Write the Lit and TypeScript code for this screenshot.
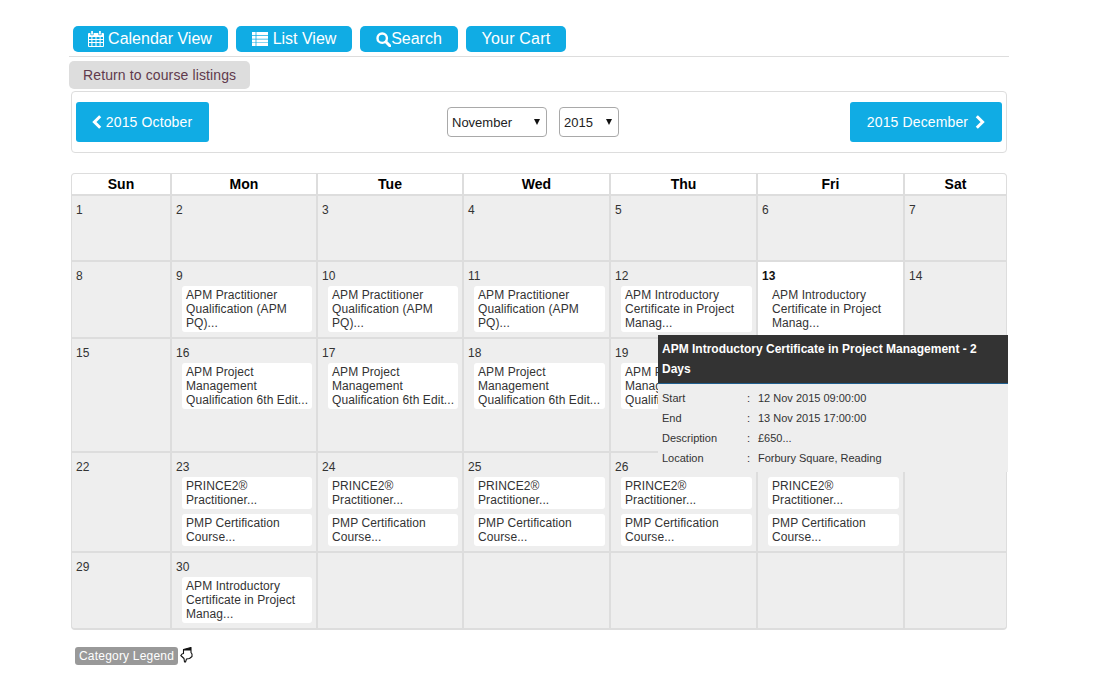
import { LitElement, html, css, svg } from "lit";
import { customElement } from "lit/decorators.js";

const PRAC = "APM Practitioner Qualification (APM PQ)...";
const PROJ = "APM Project Management Qualification 6th Edit...";
const INTRO = "APM Introductory Certificate in Project Manag...";
const P2 = "PRINCE2® Practitioner...";
const PMP = "PMP Certification Course...";

type Cell = { d?: number; ev?: string[]; today?: boolean };
const weeks: Cell[][] = [
  [1, 2, 3, 4, 5, 6, 7].map((d) => ({ d })),
  [{ d: 8 }, { d: 9, ev: [PRAC] }, { d: 10, ev: [PRAC] }, { d: 11, ev: [PRAC] }, { d: 12, ev: [INTRO] }, { d: 13, ev: [INTRO], today: true }, { d: 14 }],
  [{ d: 15 }, { d: 16, ev: [PROJ] }, { d: 17, ev: [PROJ] }, { d: 18, ev: [PROJ] }, { d: 19, ev: [PROJ] }, {}, {}],
  [{ d: 22 }, { d: 23, ev: [P2, PMP] }, { d: 24, ev: [P2, PMP] }, { d: 25, ev: [P2, PMP] }, { d: 26, ev: [P2, PMP] }, { ev: [P2, PMP] }, {}],
  [{ d: 29 }, { d: 30, ev: [INTRO] }, {}, {}, {}, {}, {}],
];
const days = ["Sun", "Mon", "Tue", "Wed", "Thu", "Fri", "Sat"];

const calIcon = html`<svg class="ic" width="16" height="16" viewBox="0 0 16 16" fill="#fff"><path d="M3.2 0h1.7v3.4H3.2zM11.1 0h1.7v3.4h-1.7z"/><path fill-rule="evenodd" d="M1 2h1.4v1.6a.6.6 0 0 0 .6.6h2a.6.6 0 0 0 .6-.6V2h4.8v1.6a.6.6 0 0 0 .6.6h2a.6.6 0 0 0 .6-.6V2H15a1 1 0 0 1 1 1v12a1 1 0 0 1-1 1H1a1 1 0 0 1-1-1V3a1 1 0 0 1 1-1zM1 6v2h2.4V6zm3.4 0v2h3.1V6zm4.1 0v2h3.1V6zm4.1 0v2H15V6zM1 9v2h2.4V9zm3.4 0v2h3.1V9zm4.1 0v2h3.1V9zm4.1 0v2H15V9zM1 12v3h2.4v-3zm3.4 0v3h3.1v-3zm4.1 0v3h3.1v-3zm4.1 0v3H15v-3z"/></svg>`;
const listIcon = html`<svg class="ic" width="16" height="14" viewBox="0 0 16 14" fill="#fff"><path d="M0 0h3.6v3H0zM4.4 0H16v3H4.4zM0 3.7h3.6v3H0zM4.4 3.7H16v3H4.4zM0 7.4h3.6v3H0zM4.4 7.4H16v3H4.4zM0 11h3.6v3H0zM4.4 11H16v3H4.4z"/></svg>`;
const searchIcon = html`<svg class="ic" width="15" height="15" viewBox="0 0 15 15" fill="none" stroke="#fff"><circle cx="6.2" cy="6.2" r="4.7" stroke-width="2.4"/><path d="M9.8 9.8l4 4" stroke-width="3" stroke-linecap="round"/></svg>`;
const chevL = html`<svg class="ic" width="10" height="14" viewBox="0 0 10 14" fill="none" stroke="#fff" stroke-width="3"><path d="M8.2 1.2L2.4 7l5.8 5.8"/></svg>`;
const chevR = html`<svg class="ic" width="10" height="14" viewBox="0 0 10 14" fill="none" stroke="#fff" stroke-width="3"><path d="M1.8 1.2L7.6 7l-5.8 5.8"/></svg>`;
const tri = html`<svg class="tri" width="6" height="6" viewBox="0 0 6 6"><path d="M0 0h6L3 6z" fill="#111"/></svg>`;
const handIcon = svg`<path d="M3.5 2.5l7.5-2v5l1 1.5v2.5l-2.5 2-3 .5-1 3H4.5L4 11.5.8 8.5 2 7l1.5-.5z" fill="#fff" stroke="#111" stroke-width="1.1" stroke-linejoin="round"/><path d="M3.5 2.5l7.5-2v3H3.5z" fill="#111"/>`;

@customElement("app-root")
export class AppRoot extends LitElement {
  static styles = css`
    :host {
      display: block;
      font-family: "Liberation Sans", Arial, sans-serif;
      color: #333;
      height: 673px;
      overflow: hidden;
      position: relative;
    }
    .wrap {
      width: 940px;
      margin-left: 69px;
      padding-top: 26px;
    }
    .nav {
      display: flex;
      gap: 8px;
      padding: 0 0 4px 4px;
      border-bottom: 1px solid #ddd;
    }
    .nb {
      box-sizing: border-box;
      height: 26px;
      background: #10ace4;
      color: #fff;
      border-radius: 5px;
      font-size: 16px;
      display: flex;
      align-items: center;
      justify-content: center;
      gap: 4px;
    }
    .nb.calv { padding-right: 1px; }
    .nb.list { gap: 5px; }
    .nb.search { gap: 0; }
    .nb.cart { letter-spacing: 0.2px; }
    .ic { display: block; flex: none; }
    .back {
      display: inline-block;
      margin-top: 4px;
      height: 28px;
      line-height: 28px;
      padding: 0 14px;
      background: #ddd;
      color: #5f3a4c;
      font-size: 14px;
      letter-spacing: 0.12px;
      border-radius: 5px;
      vertical-align: top;
    }
    .bar {
      box-sizing: border-box;
      width: 936px;
      height: 62px;
      margin: 2px 0 0 2px;
      border: 1px solid #ddd;
      border-radius: 4px;
      display: grid;
      grid-template-columns: 371px 172px 1fr;
      align-items: center;
      padding: 0 4px;
    }
    .pg {
      height: 40px;
      background: #10ace4;
      color: #fff;
      border-radius: 3px;
      font-size: 14px;
      letter-spacing: 0.13px;
      display: flex;
      align-items: center;
      justify-content: center;
      gap: 4px;
    }
    .pg.prev { width: 133px; justify-self: start; padding-right: 1px; box-sizing: border-box; }
    .pg.next { width: 152px; justify-self: end; gap: 7px; }
    .sels { display: flex; gap: 12px; }
    .sel {
      box-sizing: border-box;
      height: 30px;
      border: 1px solid #a9a9a9;
      border-radius: 4px;
      background: #fff;
      color: #222;
      font-size: 13px;
      display: flex;
      align-items: center;
      justify-content: space-between;
      padding: 0 6px 0 4px;
    }
    .sel.m { width: 100px; }
    .sel.y { width: 60px; }
    .tri { display: block; }
    .cal {
      box-sizing: border-box;
      width: 936px;
      margin: 20px 0 0 2px;
      background: #ddd;
      border: 1px solid #ddd;
      border-bottom-width: 2px;
      border-radius: 4px;
      display: grid;
      grid-template-columns: 98px 144px 144px 145px 145px 145px 101px;
      grid-template-rows: 20px 64px 75px 112px 98px 75px;
      gap: 2px;
      overflow: hidden;
    }
    .h {
      background: #fff;
      color: #000;
      font-weight: bold;
      font-size: 14px;
      line-height: 20px;
      text-align: center;
    }
    .c {
      background: #eee;
      font-size: 12px;
      letter-spacing: 0.08px;
      padding: 7px 4px 0 4px;
      line-height: 14px;
      min-width: 0;
    }
    .c.today { background: #fff; color: #111; }
    .c.today .num { font-weight: bold; }
    .num { height: 17px; }
    .ev {
      background: #fff;
      border-radius: 3px;
      margin: 0 0 5px 6px;
      padding: 2px 1px 2px 4px;
      line-height: 14px;
      color: #333;
    }
    .tip {
      position: absolute;
      left: 658px;
      top: 335px;
      width: 350px;
      height: 137px;
      background: #eee;
      font-size: 11px;
      color: #333;
    }
    .tip-h {
      box-sizing: border-box;
      height: 49px;
      background: #333;
      border-bottom: 1px solid #1f5f8f;
      color: #fff;
      font-weight: bold;
      font-size: 12px;
      line-height: 20px;
      padding: 4px 4px 0 4px;
    }
    .tip-r {
      display: grid;
      grid-template-columns: 85px 11px 1fr;
      height: 20px;
      line-height: 20px;
      padding-left: 4px;
    }
    .tip-b { padding-top: 4px; }
    .legend {
      display: flex;
      align-items: flex-start;
      gap: 2px;
      margin: 17px 0 0 6px;
    }
    .lg {
      background: #999;
      color: #fff;
      font-size: 12px;
      letter-spacing: 0.2px;
      border-radius: 3px;
      height: 18px;
      line-height: 18px;
      padding: 0 4px;
    }
    .hand { display: block; }
  `;

  render() {
    return html`
      <div class="wrap">
        <div class="nav">
          <div class="nb calv" style="width:155px">${calIcon}Calendar View</div>
          <div class="nb list" style="width:116px">${listIcon}List View</div>
          <div class="nb search" style="width:98px">${searchIcon}Search</div>
          <div class="nb cart" style="width:100px">Your Cart</div>
        </div>
        <div class="back">Return to course listings</div>
        <div class="bar">
          <div class="pg prev">${chevL}2015 October</div>
          <div class="sels">
            <div class="sel m">November${tri}</div>
            <div class="sel y">2015${tri}</div>
          </div>
          <div class="pg next">2015 December${chevR}</div>
        </div>
        <div class="cal">
          ${days.map((d) => html`<div class="h">${d}</div>`)}
          ${weeks.flat().map(
            (c) => html`<div class="c ${c.today ? "today" : ""}">
              <div class="num">${c.d ?? ""}</div>
              ${(c.ev ?? []).map((e) => html`<div class="ev">${e}</div>`)}
            </div>`
          )}
        </div>
        <div class="legend">
          <div class="lg">Category Legend</div>
          <svg class="hand" width="13" height="16" viewBox="0 0 13 16">${handIcon}</svg>
        </div>
      </div>
      <div class="tip">
        <div class="tip-h">APM Introductory Certificate in Project Management - 2 Days</div>
        <div class="tip-b">
          <div class="tip-r"><span>Start</span><span>:</span><span>12 Nov 2015 09:00:00</span></div>
          <div class="tip-r"><span>End</span><span>:</span><span>13 Nov 2015 17:00:00</span></div>
          <div class="tip-r"><span>Description</span><span>:</span><span>£650...</span></div>
          <div class="tip-r"><span>Location</span><span>:</span><span>Forbury Square, Reading</span></div>
        </div>
      </div>
    `;
  }
}
